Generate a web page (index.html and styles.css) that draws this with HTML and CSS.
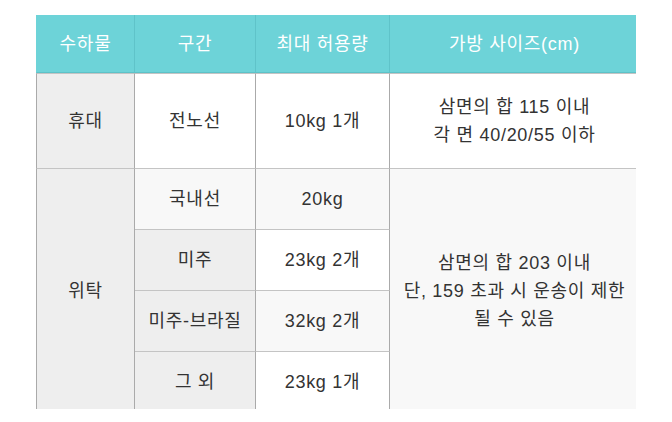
FILE: index.html
```html
<!DOCTYPE html>
<html lang="ko">
<head>
<meta charset="utf-8">
<link rel="stylesheet" href="styles.css">
</head>
<body>
<div class="wrap">
<table class="bag">
  <colgroup>
    <col class="c1"><col class="c2"><col class="c3"><col class="c4">
  </colgroup>
  <thead>
    <tr class="head">
      <th class="first">수하물</th>
      <th>구간</th>
      <th>최대 허용량</th>
      <th>가방 사이즈(cm)</th>
    </tr>
  </thead>
  <tbody>
    <tr class="r-carry">
      <td class="first kind">휴대</td>
      <td>전노선</td>
      <td>10kg 1개</td>
      <td>삼면의 합 115 이내<br>각 면 40/20/55 이하</td>
    </tr>
    <tr class="r-row">
      <td class="first kind" rowspan="4">위탁</td>
      <td class="light">국내선</td>
      <td class="light">20kg</td>
      <td class="light" rowspan="4">삼면의 합 203 이내<br>단, 159 초과 시 운송이 제한<br>될 수 있음</td>
    </tr>
    <tr class="r-row">
      <td class="grey">미주</td>
      <td>23kg 2개</td>
    </tr>
    <tr class="r-row">
      <td class="grey">미주-브라질</td>
      <td class="light">32kg 2개</td>
    </tr>
    <tr class="r-row">
      <td class="grey">그 외</td>
      <td>23kg 1개</td>
    </tr>
  </tbody>
</table>
</div>
</body>
</html>
```
FILE: styles.css
```css
html, body {
  margin: 0;
  padding: 0;
  background: #fff;
}
body {
  font-family: "Liberation Sans", "Noto Sans CJK KR", sans-serif;
  color: #333;
}
.wrap {
  margin: 15px 0 0 36px;
  width: 600px;
  height: 394px;
  overflow: hidden;
}
.bag {
  border-collapse: separate;
  border-spacing: 0;
  table-layout: fixed;
  width: 604px;
  font-size: 18px;
  line-height: 28px;
  letter-spacing: 0.7px;
}
.c1 { width: 99px; }
.c2 { width: 121px; }
.c3 { width: 134px; }
.c4 { width: 250px; }
th, td {
  padding: 0;
  text-align: center;
  vertical-align: middle;
  box-sizing: border-box;
  white-space: nowrap;
}
.head th {
  background: #6dd3d8;
  color: #fff;
  font-weight: normal;
  height: 58px;
  border-right: 1px solid #5fc3c9;
  border-bottom: 1px solid #5dc2c8;
}
.head th.first {
  border-left: 1px solid #6dd3d8;
}
td {
  background: #fff;
  border-right: 1px solid #aaa;
  border-bottom: 1px solid #c4c4c4;
}
td.first {
  border-left: 1px solid #aaa;
}
td.kind {
  background: #eeeeee;
}
td.grey {
  background: #eeeeee;
}
td.light {
  background: #f8f8f8;
}
.r-carry td {
  height: 96px;
  border-top: 1px solid #c4c4c4;
}
.r-row td {
  height: 61px;
}
```
